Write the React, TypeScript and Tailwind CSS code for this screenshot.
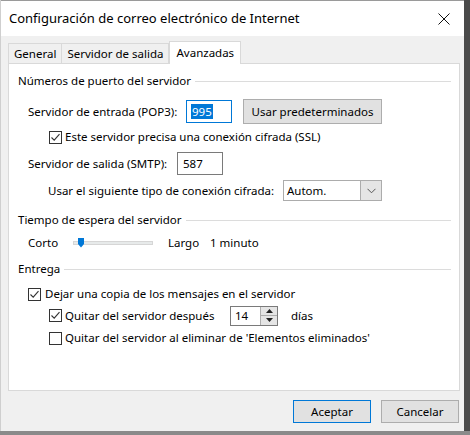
import React from "react";

const font = { fontFamily: '"Noto Sans", "Segoe UI", sans-serif' };

const Check: React.FC<{ checked?: boolean }> = ({ checked }) => (
  <span className="w-[13px] h-[13px] border border-[#333333] bg-white flex items-center justify-center shrink-0">
    {checked && (
      <svg width="11" height="11" viewBox="0 0 11 11">
        <path d="M1.5 5.5 L4.2 8.2 L9.5 2.2" fill="none" stroke="#333333" strokeWidth="1.1" />
      </svg>
    )}
  </span>
);

const Heading: React.FC<{ label: string; className?: string }> = ({ label, className }) => (
  <div className={"flex items-center h-[16px] " + (className || "")}>
    <span className="whitespace-nowrap">{label}</span>
    <div className="flex-1 h-px bg-[#dcdcdc] ml-[4px]" />
  </div>
);

const App: React.FC = () => {
  return (
    <div className="w-[470px] h-[435px] bg-[#7a7a7a] flex flex-col overflow-hidden text-[11.5px] text-black whitespace-nowrap" style={font}>
      <div className="flex h-[431px]">
        <div className="w-[464px] bg-[#f0f0f0] flex flex-col border-l border-[#cfcfcf]">
          {/* title bar */}
          <div className="h-[36px] bg-white flex items-center pl-[8px] pr-[14px] border-t border-[#9a9a9a]">
            <span className="text-[13px] flex-1">Configuración de correo electrónico de Internet</span>
            <svg width="12" height="12" viewBox="0 0 12 12">
              <path d="M0.5 0.5 L11.5 11.5 M11.5 0.5 L0.5 11.5" stroke="#111" strokeWidth="1" />
            </svg>
          </div>

          <div className="flex flex-col pl-[7px] pr-[4px] pt-[5px]">
            {/* tabs */}
            <div className="flex items-end h-[22px]">
              <div className="h-[20px] px-[5px] flex items-center border border-b-0 border-[#d9d9d9] bg-[#f0f0f0]">General</div>
              <div className="h-[20px] px-[5px] flex items-center border border-b-0 border-l-0 border-[#d9d9d9] bg-[#f0f0f0]">Servidor de salida</div>
              <div className="h-[23px] px-[6px] flex items-center border border-b-0 border-[#d9d9d9] bg-white -mb-px relative z-10">Avanzadas</div>
            </div>

            {/* panel */}
            <div className="h-[328px] bg-white border border-[#d9d9d9] pl-[9px] pr-[8px] flex flex-col">
              <Heading label="Números de puerto del servidor" className="mt-[9px]" />

              <div className="flex items-center h-[25px] mt-[10px] pl-[10px]">
                <span className="w-[158px]">Servidor de entrada (POP3):</span>
                <div className="w-[46px] h-[23px] border border-[#0078d7] flex items-center pl-[4px]">
                  <span className="bg-[#0078d7] text-white px-[1px] leading-[15px]">995</span>
                </div>
                <button className="ml-[11px] w-[139px] h-[25px] bg-[#e1e1e1] border border-[#adadad]">Usar predeterminados</button>
              </div>

              <div className="flex items-center h-[16px] mt-[5px] pl-[31px] gap-[3px]">
                <Check checked />
                <span>Este servidor precisa una conexión cifrada (SSL)</span>
              </div>

              <div className="flex items-center h-[23px] mt-[7px] pl-[10px]">
                <span className="w-[149px]">Servidor de salida (SMTP):</span>
                <div className="w-[46px] h-[23px] border border-[#7a7a7a] flex items-center pl-[5px]">587</div>
              </div>

              <div className="flex items-center h-[21px] mt-[5px] pl-[30px]">
                <span className="w-[235px]">Usar el siguiente tipo de conexión cifrada:</span>
                <div className="w-[99px] h-[21px] border border-[#acacac] flex items-center">
                  <span className="flex-1 pl-[3px]">Autom.</span>
                  <div className="w-[21px] h-full bg-[#e5e5e5] border-l border-[#acacac] flex items-center justify-center">
                    <svg width="9" height="6" viewBox="0 0 9 6">
                      <path d="M0.5 0.8 L4.5 4.8 L8.5 0.8" fill="none" stroke="#555" strokeWidth="1" />
                    </svg>
                  </div>
                </div>
              </div>

              <Heading label="Tiempo de espera del servidor" className="mt-[11px]" />

              <div className="flex items-center h-[16px] mt-[7px] pl-[10px]">
                <span className="w-[45px]">Corto</span>
                <div className="relative w-[80px] h-[16px] flex items-center">
                  <div className="w-full h-[4px] bg-[#e7eaea] border border-[#d6d6d6]" />
                  <svg className="absolute left-[5px] top-[3px]" width="6" height="10" viewBox="0 0 6 10">
                    <path d="M0 0 H6 V6 L3 9.5 L0 6 Z" fill="#0078d7" />
                  </svg>
                </div>
                <span className="ml-[15px] w-[42px]">Largo</span>
                <span>1 minuto</span>
              </div>

              <Heading label="Entrega" className="mt-[10px]" />

              <div className="flex items-center h-[16px] mt-[9px] pl-[10px] gap-[4px]">
                <Check checked />
                <span>Dejar una copia de los mensajes en el servidor</span>
              </div>

              <div className="flex items-center h-[21px] mt-[3px] pl-[31px] gap-[3px]">
                <Check checked />
                <span className="w-[162px]">Quitar del servidor después</span>
                <div className="w-[48px] h-[20px] border border-[#7a7a7a] flex">
                  <span className="flex-1 pl-[4px] flex items-center">14</span>
                  <div className="w-[17px] flex flex-col border-l border-[#adadad]">
                    <div className="flex-1 bg-[#e5e5e5] border-b border-[#adadad] flex items-center justify-center">
                      <svg width="7" height="4" viewBox="0 0 7 4"><path d="M0 4 L3.5 0 L7 4 Z" fill="#222" /></svg>
                    </div>
                    <div className="flex-1 bg-[#e5e5e5] flex items-center justify-center">
                      <svg width="7" height="4" viewBox="0 0 7 4"><path d="M0 0 L3.5 4 L7 0 Z" fill="#222" /></svg>
                    </div>
                  </div>
                </div>
                <span className="ml-[10px]">días</span>
              </div>

              <div className="flex items-center h-[16px] mt-[4px] pl-[31px] gap-[3px]">
                <Check />
                <span>Quitar del servidor al eliminar de 'Elementos eliminados'</span>
              </div>
            </div>

            {/* buttons */}
            <div className="flex justify-end gap-[10px] mt-[9px] pr-[1px]">
              <button className="w-[78px] h-[23px] bg-[#e1e1e1] border border-[#0078d7]">Aceptar</button>
              <button className="w-[78px] h-[23px] bg-[#e1e1e1] border border-[#adadad]">Cancelar</button>
            </div>
          </div>
        </div>
        <div className="flex-1 bg-[#4a4a4a]" />
      </div>
      <div className="flex-1 bg-[#8a8a8a]" />
    </div>
  );
};

export default App;
